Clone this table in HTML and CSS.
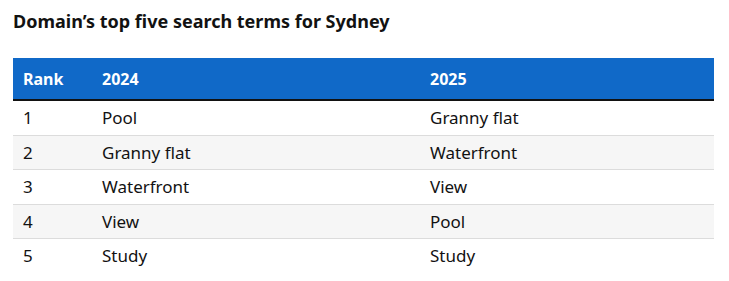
FILE: index.html
```html
<!DOCTYPE html>
<html lang="en">
<head>
<meta charset="utf-8">
<title>Domain's top five search terms for Sydney</title>
<link rel="stylesheet" href="styles.css">
</head>
<body>
<figure class="figure">
  <h2 class="title">Domain’s top five search terms for Sydney</h2>
  <table class="table">
    <thead>
      <tr><th class="c-rank">Rank</th><th class="c-a">2024</th><th class="c-b">2025</th></tr>
    </thead>
    <tbody>
      <tr><td>1</td><td>Pool</td><td>Granny flat</td></tr>
      <tr><td>2</td><td>Granny flat</td><td>Waterfront</td></tr>
      <tr><td>3</td><td>Waterfront</td><td>View</td></tr>
      <tr><td>4</td><td>View</td><td>Pool</td></tr>
      <tr><td>5</td><td>Study</td><td>Study</td></tr>
    </tbody>
  </table>
</figure>
</body>
</html>
```
FILE: styles.css
```css
html, body { margin: 0; padding: 0; background: #fff; }
body { font-family: "Noto Sans", "Open Sans", sans-serif; color: #121212; }
.figure { margin: 0; padding: 10px 15px 0 13px; }
.title { margin: 0 0 26px; font-size: 18px; line-height: 22px; font-weight: 700; color: #121212; }
.table { width: 701px; border-collapse: collapse; font-size: 17px; }
.table th { background: #1069c8; color: #fff; text-align: left; font-size: 16px; font-weight: 700; height: 41px; padding: 0 10px; border-bottom: 2px solid #121212; }
.table td { height: 33.5px; padding: 0 10px; border-bottom: 1px solid #dcdcdc; }
.table tbody tr:nth-child(even) td { background: #f6f6f6; }
.table tbody tr:last-child td { border-bottom: none; }
.c-rank { width: 59px; }
.c-a { width: 308px; }
```
